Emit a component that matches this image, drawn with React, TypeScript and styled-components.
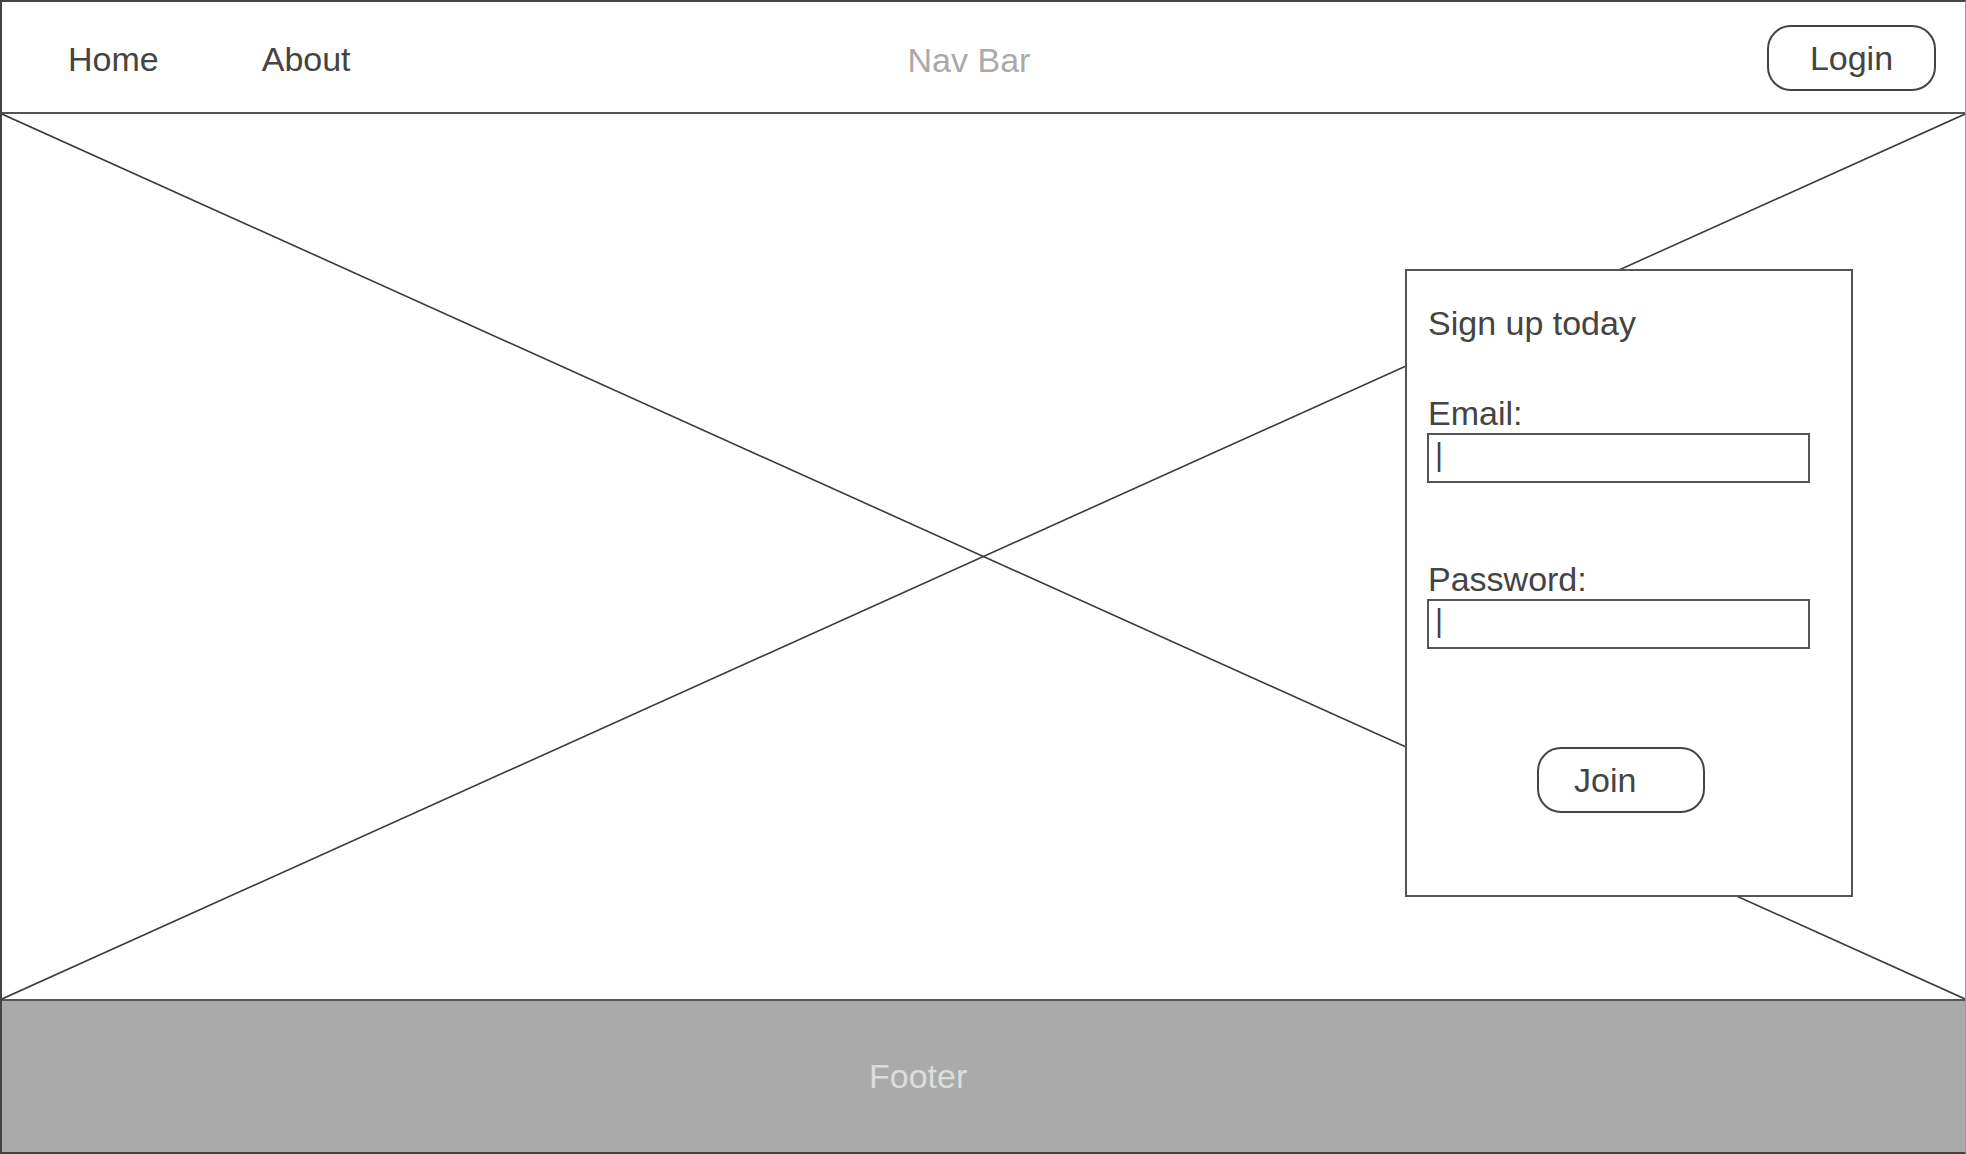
import React from "react";
import styled, { createGlobalStyle } from "styled-components";

const GlobalStyle = createGlobalStyle`
  html, body {
    margin: 0;
    padding: 0;
    background: #fff;
  }
  body {
    font-family: "Liberation Sans", Arial, sans-serif;
    color: #444;
  }
`;

const App: React.FC = () => {
    return (
        <>
            <GlobalStyle />
            <Frame>
                <Nav>
                    <NavLink>Home</NavLink>
                    <NavLink $gap={103}>About</NavLink>
                    <NavTitle>Nav Bar</NavTitle>
                    <PillButton $width={169}>Login</PillButton>
                </Nav>
                <Hero>
                    <Placeholder preserveAspectRatio="none">
                        <line x1="0" y1="0" x2="100%" y2="100%" />
                        <line x1="0" y1="100%" x2="100%" y2="0" />
                    </Placeholder>
                    <SignupCard>
                        <CardTitle>Sign up today</CardTitle>
                        <FieldLabel $top={51}>Email:</FieldLabel>
                        <TextBox>|</TextBox>
                        <FieldLabel $top={77}>Password:</FieldLabel>
                        <TextBox>|</TextBox>
                        <JoinButton>Join</JoinButton>
                    </SignupCard>
                </Hero>
                <Footer>
                    <FooterText>Footer</FooterText>
                </Footer>
            </Frame>
        </>
    );
};

export default App;

const Frame = styled.div`
  width: 1966px;
  height: 1154px;
  box-sizing: border-box;
  border: 2px solid #444;
  border-right: 1px solid #999;
  display: flex;
  flex-direction: column;
  overflow: hidden;
`
const Nav = styled.div`
  height: 112px;
  box-sizing: border-box;
  border-bottom: 2px solid #555;
  display: flex;
  align-items: center;
  padding: 4px 29px 0 66px;
  flex-shrink: 0;
`
const NavLink = styled.div<{ $gap?: number }>`
  font-size: 34px;
  color: #444;
  margin-left: ${({ $gap }) => $gap ?? 0}px;
`
const NavTitle = styled.div`
  font-size: 34px;
  color: #aaa;
  margin-left: 557px;
  margin-top: 3px;
`
const PillButton = styled.div<{ $width: number }>`
  margin-left: auto;
  margin-top: -2px;
  width: ${({ $width }) => $width}px;
  height: 66px;
  box-sizing: border-box;
  border: 2px solid #444;
  border-radius: 24px;
  display: flex;
  align-items: center;
  justify-content: center;
  font-size: 34px;
  color: #444;
`
const Hero = styled.div`
  position: relative;
  flex: 1;
  display: flex;
  justify-content: flex-end;
  align-items: flex-start;
  padding: 155px 112px 0 0;
`
const Placeholder = styled.svg`
  position: absolute;
  inset: 0;
  width: 100%;
  height: 100%;

  line {
    stroke: #3a3a3a;
    stroke-width: 1.6;
  }
`
const SignupCard = styled.div`
  position: relative;
  width: 448px;
  height: 628px;
  box-sizing: border-box;
  border: 2px solid #555;
  background: #fff;
  padding: 33px 0 0 20px;
  display: flex;
  flex-direction: column;
  align-items: flex-start;
`
const CardTitle = styled.div`
  font-size: 34px;
  color: #444;
  margin-left: 1px;
`
const FieldLabel = styled.div<{ $top: number }>`
  font-size: 34px;
  color: #444;
  margin-top: ${({ $top }) => $top}px;
  margin-left: 1px;
`
const TextBox = styled.div`
  width: 383px;
  height: 50px;
  box-sizing: border-box;
  border: 2px solid #555;
  padding: 4px 0 0 6px;
  font-size: 31px;
  line-height: 1;
  color: #444;
`
const JoinButton = styled.div`
  margin-top: 98px;
  margin-left: 110px;
  width: 168px;
  height: 66px;
  box-sizing: border-box;
  border: 2px solid #444;
  border-radius: 24px;
  display: flex;
  align-items: center;
  padding-left: 35px;
  font-size: 34px;
  color: #444;
`
const Footer = styled.div`
  height: 153px;
  box-sizing: border-box;
  border-top: 2px solid #555;
  background: #aaa;
  display: flex;
  align-items: center;
  padding-left: 867px;
  flex-shrink: 0;
`
const FooterText = styled.div`
  font-size: 34px;
  color: #ddd;
`
